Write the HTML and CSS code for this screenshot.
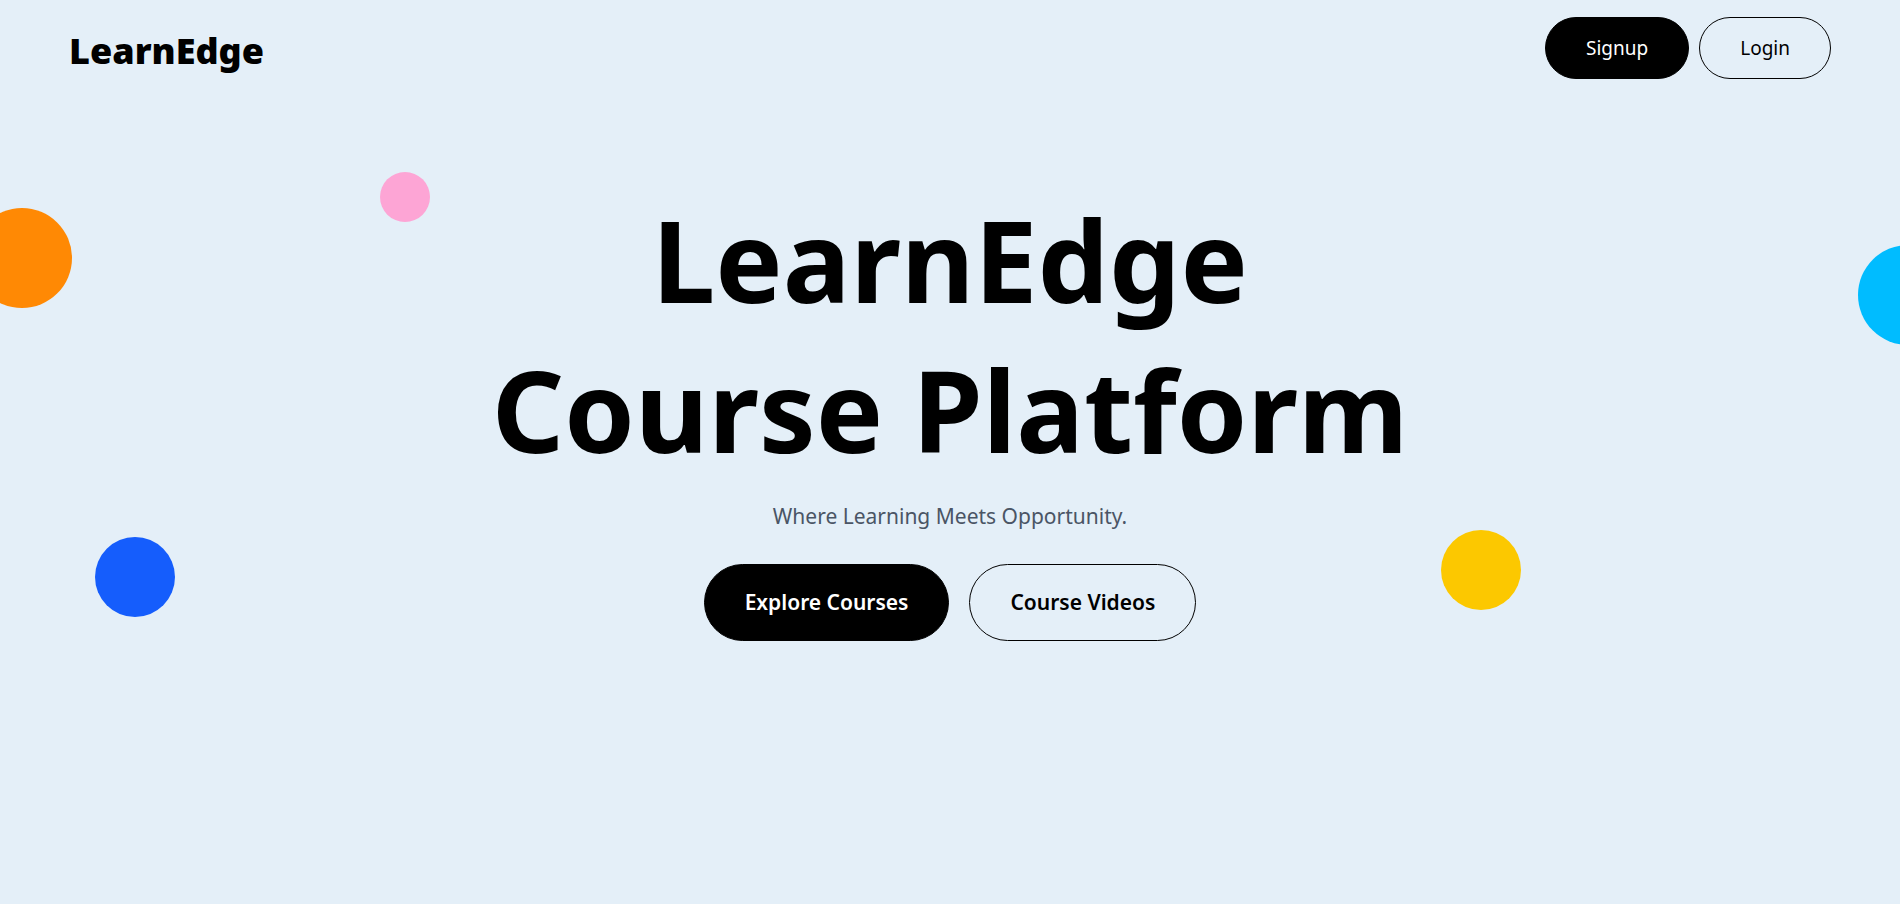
FILE: index.html
```html
<!DOCTYPE html>
<html lang="en">
<head>
<meta charset="utf-8">
<meta name="viewport" content="width=device-width, initial-scale=1">
<title>LearnEdge</title>
<link rel="stylesheet" href="styles.css">
</head>
<body>
<div class="page">
  <span class="dot dot-orange"></span>
  <span class="dot dot-pink"></span>
  <span class="dot dot-cyan"></span>
  <span class="dot dot-blue"></span>
  <span class="dot dot-yellow"></span>
  <header class="nav">
    <a class="logo" href="#">LearnEdge</a>
    <nav class="nav-actions">
      <button class="btn btn-small btn-dark" type="button">Signup</button>
      <button class="btn btn-small btn-outline" type="button">Login</button>
    </nav>
  </header>
  <main class="hero">
    <h1 class="title">LearnEdge<br>Course Platform</h1>
    <p class="tagline">Where Learning Meets Opportunity.</p>
    <div class="hero-actions">
      <button class="btn btn-large btn-dark" type="button">Explore Courses</button>
      <button class="btn btn-large btn-outline" type="button">Course Videos</button>
    </div>
  </main>
</div>
</body>
</html>
```
FILE: styles.css
```css
* {
  box-sizing: border-box;
}

body {
  margin: 0;
  background: #e4eff8;
  color: #000;
  font-family: "Noto Sans", "Open Sans", sans-serif;
}

.page {
  position: relative;
  min-height: 100vh;
  overflow: hidden;
}

.nav {
  position: relative;
  display: flex;
  align-items: center;
  justify-content: space-between;
  padding: 17px 69px;
}

.logo {
  padding-top: 6px;
  color: #000;
  font-size: 36px;
  font-weight: 900;
  line-height: 48px;
  text-decoration: none;
}

.nav-actions {
  display: flex;
  gap: 10px;
}

.btn {
  border: 1px solid #000;
  border-radius: 40px;
  padding: 0 40px;
  font-family: inherit;
  cursor: pointer;
}

.btn-small {
  font-size: 19px;
  line-height: 60px;
}

.btn-large {
  font-size: 21px;
  font-weight: 600;
  line-height: 75px;
}

.btn-dark {
  background: #000;
  color: #fff;
}

.btn-outline {
  background: transparent;
  color: #000;
}

.hero {
  position: relative;
  display: flex;
  flex-direction: column;
  align-items: center;
  padding: 88px 20px;
  text-align: center;
}

.title {
  margin: 0;
  font-size: 113px;
  font-weight: 700;
  line-height: 150px;
}

.tagline {
  margin: 12px 0 28px;
  color: #4a5565;
  font-size: 21px;
  line-height: 40px;
}

.hero-actions {
  display: flex;
  flex-wrap: wrap;
  justify-content: center;
  gap: 20px;
}

.dot {
  position: absolute;
  border-radius: 50%;
}

.dot-orange {
  top: 208px;
  left: -28px;
  width: 100px;
  height: 100px;
  background: #ff8904;
}

.dot-pink {
  top: 172px;
  left: 20%;
  width: 50px;
  height: 50px;
  background: #fda5d5;
}

.dot-cyan {
  top: 245px;
  right: -58px;
  width: 100px;
  height: 100px;
  background: #00bcff;
}

.dot-blue {
  top: 537px;
  left: 5%;
  width: 80px;
  height: 80px;
  background: #155dfc;
}

.dot-yellow {
  top: 530px;
  right: 379px;
  width: 80px;
  height: 80px;
  background: #fcc800;
}
```
